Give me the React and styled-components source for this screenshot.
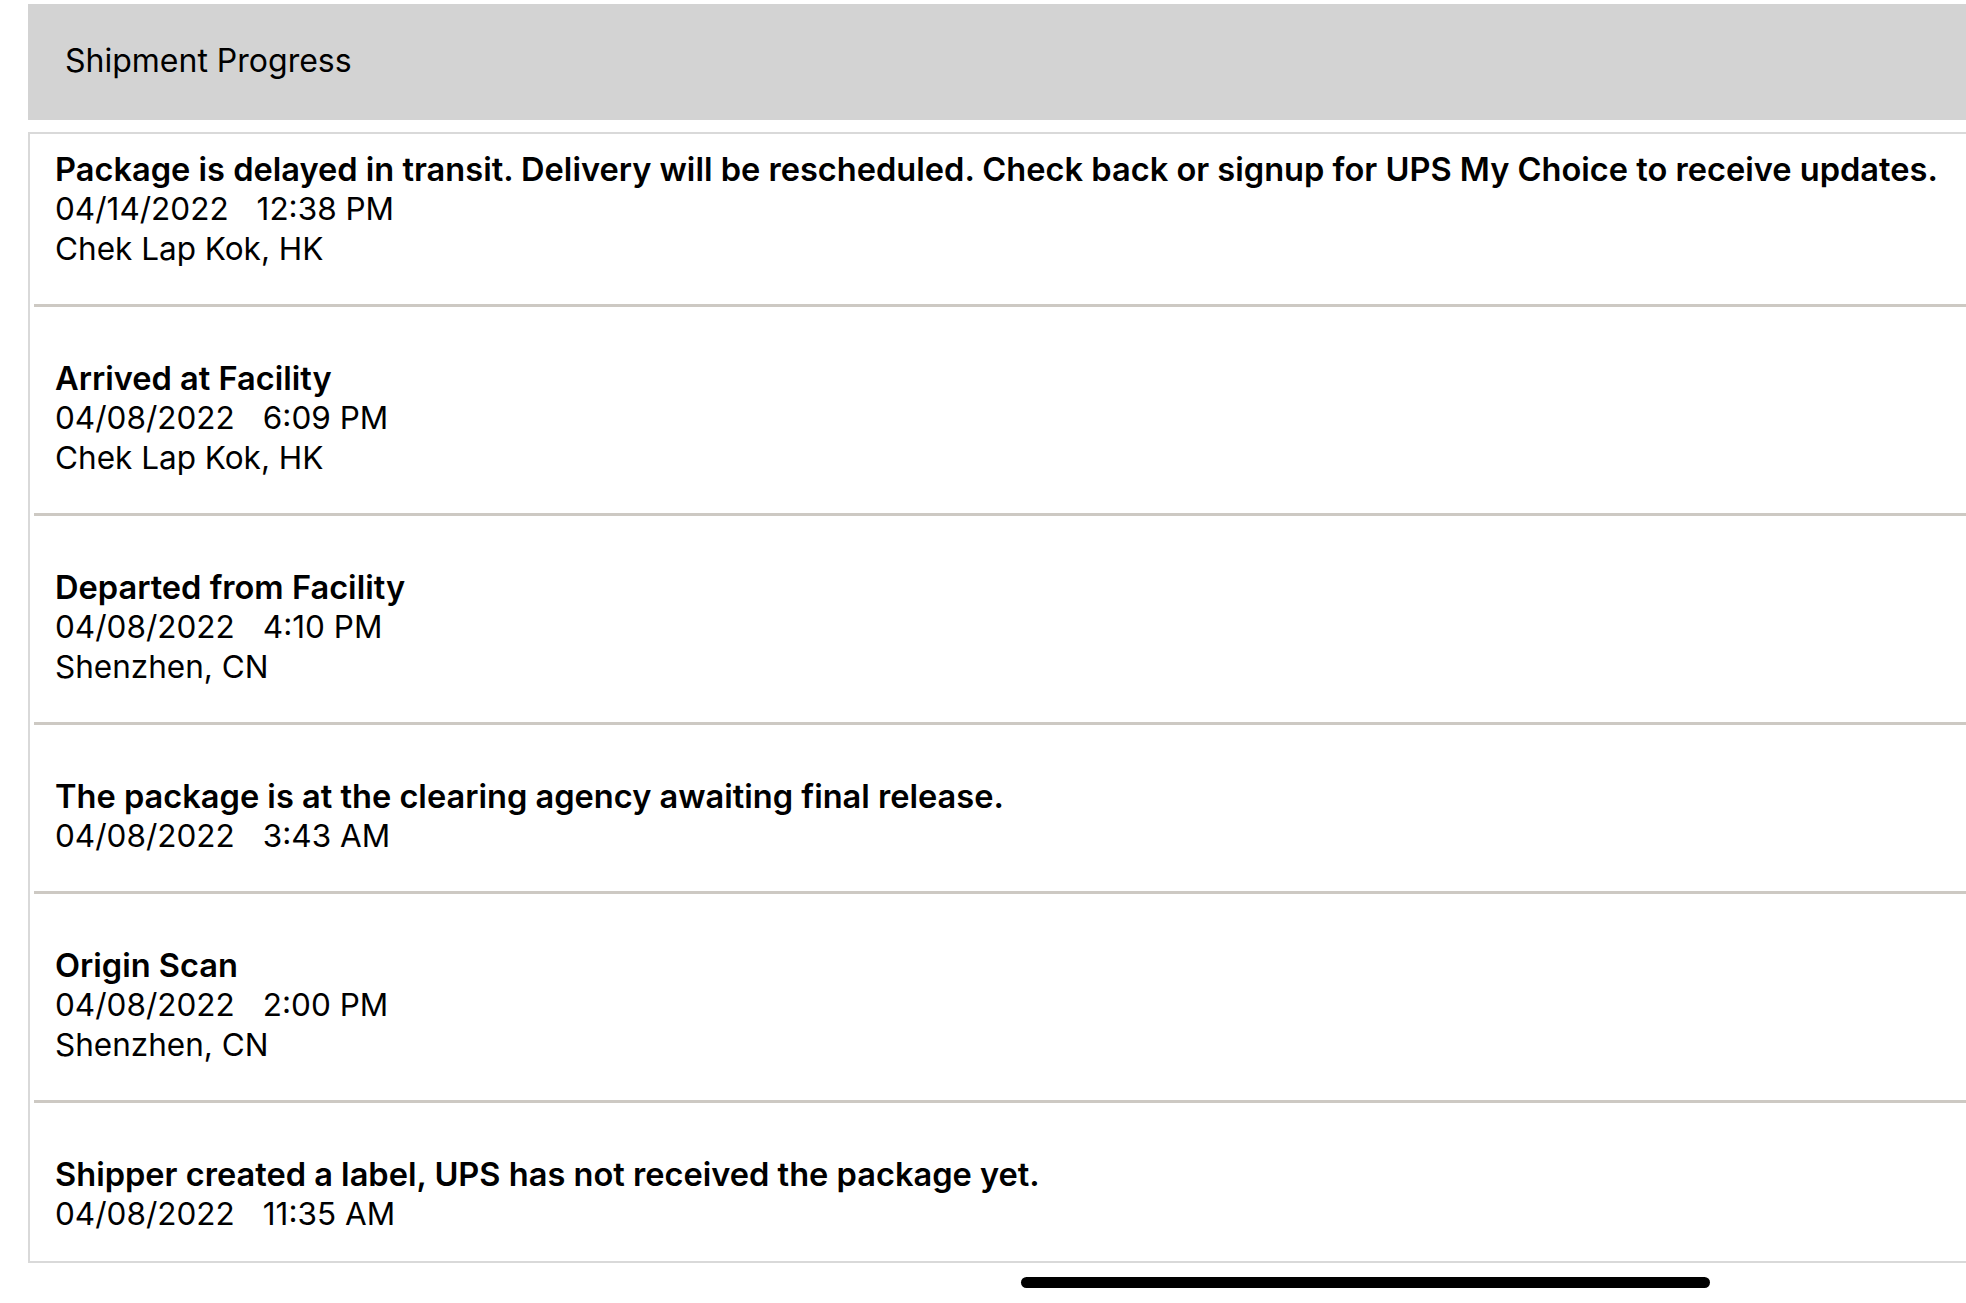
import styled, {createGlobalStyle} from "styled-components";

const GlobalStyle = createGlobalStyle`
  html, body {
    margin: 0;
    padding: 0;
    background: #ffffff;
  }

  body {
    font-family: Inter, "Noto Sans", "Liberation Sans", sans-serif;
    color: #000000;
    overflow: hidden;
  }
`;

const Page = styled.div`
  position: relative;
  height: 1303px;
  padding: 4px 0 0 28px;
  box-sizing: border-box;
`;

const Header = styled.div`
  display: flex;
  align-items: center;
  height: 116px;
  padding: 0 0 4px 37px;
  box-sizing: border-box;
  background: #d3d3d3;
  font-size: 32px;
  font-weight: 400;
`;

const Panel = styled.div`
  margin-top: 12px;
  border-top: 2px solid #d9d9d9;
  border-left: 2px solid #d9d9d9;
  border-bottom: 2px solid #d9d9d9;
`;

const Event = styled.div`
  margin-left: 4px;
  padding: ${({first}) => (first ? "15px" : "51px")} 0 ${({last}) => (last ? "27px" : "35px")} 21px;
  border-bottom: ${({last}) => (last ? "none" : "3px solid #cdc9c3")};
  font-size: 31.5px;
  line-height: 40px;
`;

const Title = styled.div`
  font-size: 32.6px;
  font-weight: 600;
  white-space: nowrap;
`;

const Line = styled.div`
  display: flex;
  gap: 28px;
`;

const HomeBar = styled.div`
  position: absolute;
  left: 1021px;
  top: 1277px;
  width: 689px;
  height: 11px;
  border-radius: 6px;
  background: #000000;
`;

const events = [
  {
    title: "Package is delayed in transit. Delivery will be rescheduled. Check back or signup for UPS My Choice to receive updates.",
    date: "04/14/2022",
    time: "12:38 PM",
    place: "Chek Lap Kok, HK",
  },
  {title: "Arrived at Facility", date: "04/08/2022", time: "6:09 PM", place: "Chek Lap Kok, HK"},
  {title: "Departed from Facility", date: "04/08/2022", time: "4:10 PM", place: "Shenzhen, CN"},
  {title: "The package is at the clearing agency awaiting final release.", date: "04/08/2022", time: "3:43 AM"},
  {title: "Origin Scan", date: "04/08/2022", time: "2:00 PM", place: "Shenzhen, CN"},
  {title: "Shipper created a label, UPS has not received the package yet.", date: "04/08/2022", time: "11:35 AM"},
];

export default function App() {
  return (
    <Page>
      <GlobalStyle/>
      <Header>Shipment Progress</Header>
      <Panel>
        {events.map((ev, i) => (
          <Event key={i} first={i === 0} last={i === events.length - 1}>
            <Title>{ev.title}</Title>
            <Line>
              <span>{ev.date}</span>
              <span>{ev.time}</span>
            </Line>
            {ev.place && <div>{ev.place}</div>}
          </Event>
        ))}
      </Panel>
      <HomeBar/>
    </Page>
  );
}
